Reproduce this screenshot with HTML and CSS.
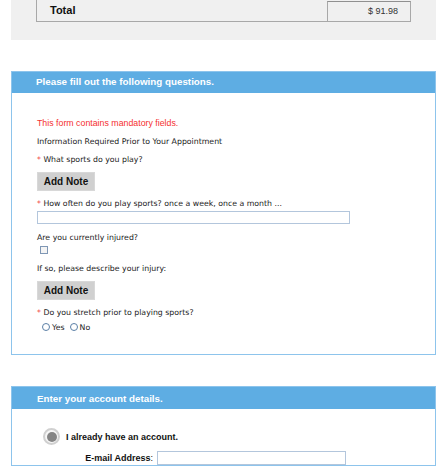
FILE: index.html
```html
<!DOCTYPE html>
<html>
<head>
<meta charset="utf-8">
<link rel="stylesheet" href="styles.css">
</head>
<body>
<div class="summary">
  <div class="total-row">
    <div class="total-label">Total</div>
    <div class="total-amount">$ 91.98</div>
  </div>
</div>

<section class="panel questions">
  <h2 class="panel-head">Please fill out the following questions.</h2>
  <div class="panel-body">
    <p class="notice">This form contains mandatory fields.</p>
    <p class="label gap-7">Information Required Prior to Your Appointment</p>
    <p class="label gap-6"><span class="req">*</span> What sports do you play?</p>
    <button class="note-btn" type="button">Add Note</button>
    <p class="label gap-7"><span class="req">*</span> How often do you play sports? once a week, once a month ...</p>
    <input class="text-field" type="text">
    <p class="label gap-8">Are you currently injured?</p>
    <span class="checkbox"></span>
    <p class="label gap-9">If so, please describe your injury:</p>
    <button class="note-btn" type="button">Add Note</button>
    <p class="label gap-7"><span class="req">*</span> Do you stretch prior to playing sports?</p>
    <div class="radio-row">
      <span class="radio"></span><span class="radio-text">Yes</span>
      <span class="radio"></span><span class="radio-text">No</span>
    </div>
  </div>
</section>

<section class="panel account">
  <h2 class="panel-head">Enter your account details.</h2>
  <div class="panel-body account-body">
    <div class="choice">
      <span class="big-radio"><span class="big-dot"></span></span>
      <span class="choice-text">I already have an account.</span>
    </div>
    <div class="email-row">
      <label class="email-label"><b>E-mail Address</b>:</label>
      <input class="email-field" type="text">
    </div>
  </div>
</section>
</body>
</html>
```

FILE: styles.css
```css
html, body {
  margin: 0;
  padding: 0;
  background: #ffffff;
}
body {
  font-family: "Liberation Sans", Arial, sans-serif;
  color: #222;
}

/* summary */
.summary {
  margin-left: 11px;
  width: 425px;
  height: 40px;
  background: #f0f0f0;
  box-sizing: border-box;
  padding-left: 25px;
}
.total-row {
  display: flex;
  width: 375px;
  height: 22px;
  box-sizing: border-box;
  border-left: 1px solid #a8a8a8;
  border-bottom: 1px solid #a8a8a8;
}
.total-label {
  flex: 1;
  padding-left: 13px;
  font-weight: bold;
  font-size: 11px;
  line-height: 21px;
  color: #111;
}
.total-amount {
  width: 84px;
  box-sizing: border-box;
  margin-top: 1px;
  border-top: 1px solid #909090;
  border-left: 1px solid #a8a8a8;
  border-right: 1px solid #a8a8a8;
  text-align: right;
  padding-right: 12px;
  font-size: 9px;
  line-height: 18px;
  color: #333;
}

/* panels */
.panel {
  margin-left: 11px;
  width: 425px;
  box-sizing: border-box;
  border: 1px solid #8dc4ec;
}
.questions {
  margin-top: 31px;
}
.account {
  margin-top: 31px;
}
.panel-head {
  margin: 0;
  height: 21px;
  background: #5eade3;
  color: #ffffff;
  font-size: 9.8px;
  font-weight: bold;
  line-height: 20px;
  padding-left: 24px;
}
.account .panel-head {
  height: 22px;
  line-height: 23px;
  padding-left: 25px;
}
.panel-body {
  display: flex;
  flex-direction: column;
  align-items: flex-start;
  padding: 24px 20px 21px 25px;
}

.notice {
  margin: 0;
  color: #f5312f;
  font-size: 8.8px;
  line-height: 12px;
}
.label {
  margin: 0;
  font-family: "DejaVu Sans", Verdana, sans-serif;
  font-size: 7.8px;
  line-height: 12px;
  color: #222;
}
.req {
  color: #f02020;
}
.gap-6 { margin-top: 6px; }
.gap-7 { margin-top: 7px; }
.gap-8 { margin-top: 8px; }
.gap-9 { margin-top: 9px; }

.note-btn {
  margin-top: 6px;
  width: 58px;
  height: 19px;
  padding: 0;
  border: 1px solid #d8d8d8;
  background: #d0d0d0;
  font-family: "Liberation Sans", Arial, sans-serif;
  font-weight: bold;
  font-size: 10px;
  color: #111;
}
.text-field {
  margin: 0;
  margin-top: 1px;
  width: 313px;
  height: 13px;
  box-sizing: border-box;
  border: 1px solid #b3c6dc;
  padding: 0;
  background: #fff;
}
.checkbox {
  margin-top: 2px;
  margin-left: 3px;
  width: 8px;
  height: 8px;
  box-sizing: border-box;
  border: 1px solid #7f97b5;
  background: #f4f4f4;
}
.radio-row {
  margin-top: 2px;
  display: flex;
  align-items: center;
  height: 12px;
  padding-left: 5px;
}
.radio {
  width: 8px;
  height: 8px;
  box-sizing: border-box;
  border: 1px solid #5b7fa6;
  border-radius: 50%;
  background: #fff;
}
.radio-text {
  font-family: "DejaVu Sans", Verdana, sans-serif;
  font-size: 7.8px;
  color: #222;
  margin-left: 2px;
  margin-right: 5px;
}

/* account panel */
.account-body {
  padding-top: 19px;
  padding-bottom: 0;
}
.choice {
  display: flex;
  align-items: center;
  padding-left: 6px;
}
.big-radio {
  width: 17px;
  height: 17px;
  box-sizing: border-box;
  border-radius: 50%;
  border: 2px solid #d0d0d0;
  background: #f6f6f6;
  display: flex;
  align-items: center;
  justify-content: center;
}
.big-dot {
  width: 10px;
  height: 10px;
  border-radius: 50%;
  background: #858585;
}
.choice-text {
  margin-left: 6px;
  font-weight: bold;
  font-size: 9px;
  color: #111;
}
.email-row {
  margin-top: 6px;
  display: grid;
  grid-template-columns: 116px 189px;
  column-gap: 4px;
  align-items: center;
}
.email-label {
  text-align: right;
  font-size: 9px;
  color: #111;
}
.email-field {
  margin: 0;
  width: 189px;
  height: 14px;
  box-sizing: border-box;
  border: 1px solid #b3c6dc;
  padding: 0;
  background: #fff;
}
```
